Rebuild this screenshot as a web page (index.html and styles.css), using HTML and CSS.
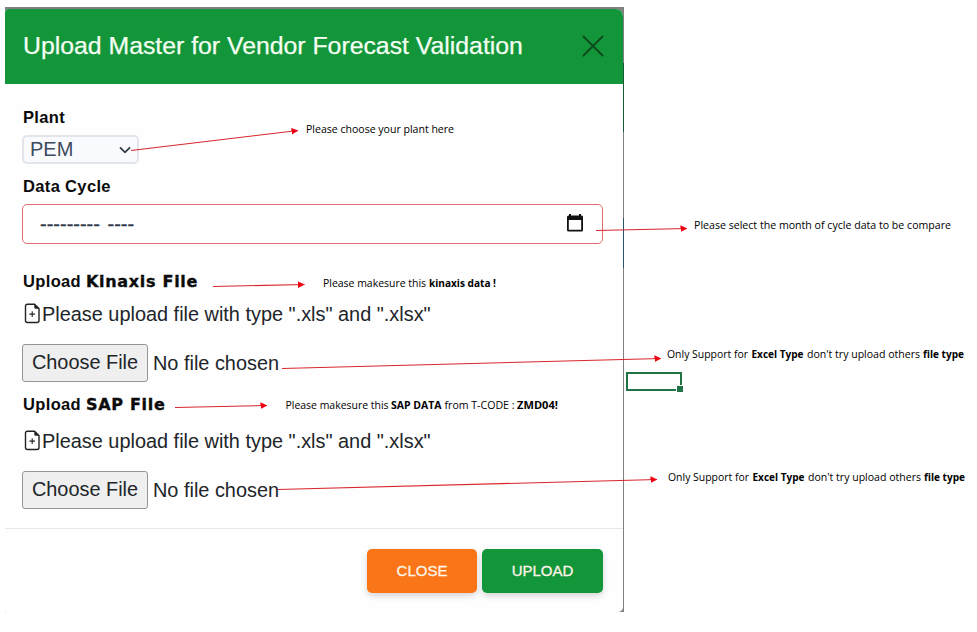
FILE: index.html
```html
<!DOCTYPE html>
<html lang="en">
<head>
<meta charset="utf-8">
<title>Upload Master for Vendor Forecast Validation</title>
<link rel="stylesheet" href="styles.css">
</head>
<body>
<main class="sheet">
  <section class="backdrop">
    <div class="modal">
      <header class="modal-header">
        <h1 class="title">Upload Master for Vendor Forecast Validation</h1>
        <svg class="close-icon" width="22" height="22" viewBox="0 0 22 22"><path d="M1.5 1.5 20.5 20.5M20.5 1.5 1.5 20.5"/></svg>
      </header>
      <div class="modal-body">
        <div class="label">Plant</div>
        <div class="select"><span>PEM</span>
          <svg width="12" height="8" viewBox="0 0 12 8"><path d="M1 1.3 6 6.3 11 1.3"/></svg>
        </div>
        <div class="label label-cycle">Data Cycle</div>
        <div class="month"><span class="month-text">--------- ----</span>
          <svg class="calendar" width="18" height="18" viewBox="0 0 18 18"><path fill-rule="evenodd" d="M3 0h2v1.500h8V0h2v1.500h.5Q17 1.500 17 3v13q0 1.500-1.500 1.500h-13Q1 17.500 1 16V3Q1 1.500 2.500 1.500H3zM2.800 6v9.700h12.400V6z"/></svg>
        </div>
        <div class="label label-kinaxis">Upload <b class="heavy">Kinaxis File</b></div>
        <div class="hint"><svg class="file-icon" width="17" height="21" viewBox="0 0 17 21"><path class="line" d="M10.500 1.200H3.500Q1.500 1.200 1.500 3.200V17.500Q1.500 19.500 3.500 19.500H13Q15 19.500 15 17.500V5.500z"/><path class="plus" d="M8.200 8.300v5.600M5.400 11.100h5.600"/><path d="M10.300 1v3.200q0 1.500 1.500 1.500H15z"/></svg><span>Please upload file with type ".xls" and ".xlsx"</span></div>
        <div class="file"><span class="choose">Choose File</span><span class="status">No file chosen</span></div>
        <div class="label label-sap">Upload <b class="heavy">SAP File</b></div>
        <div class="hint hint-sap"><svg class="file-icon" width="17" height="21" viewBox="0 0 17 21"><path class="line" d="M10.500 1.200H3.500Q1.500 1.200 1.500 3.200V17.500Q1.500 19.500 3.500 19.500H13Q15 19.500 15 17.500V5.500z"/><path class="plus" d="M8.200 8.300v5.600M5.400 11.100h5.600"/><path d="M10.300 1v3.200q0 1.500 1.500 1.500H15z"/></svg><span>Please upload file with type ".xls" and ".xlsx"</span></div>
        <div class="file"><span class="choose">Choose File</span><span class="status">No file chosen</span></div>
      </div>
      <footer class="modal-footer">
        <div class="btn btn-close">CLOSE</div>
        <div class="btn btn-upload">UPLOAD</div>
      </footer>
    </div>
  </section>
  <svg class="notes" width="977" height="632" viewBox="0 0 977 632">
    <defs>
      <marker id="head" markerUnits="userSpaceOnUse" markerWidth="7" markerHeight="7" refX="6.500" refY="3.500" orient="auto"><path class="head" d="M0 .2 6.800 3.500 0 6.800z"/></marker>
    </defs>
    <path class="edge-green" d="M623.5 63V132"/>
    <path class="edge-blue" d="M623.500 218V268"/>
    <g class="arrows">
      <path d="M131 150.500 298 130.500"/>
      <path d="M596 230.500 687 228.500"/>
      <path d="M213 286.500 304.500 284.500"/>
      <path d="M282 368.500 661 358.500"/>
      <path d="M175 407.500 267 405.500"/>
      <path d="M278 489.500 657 479.500"/>
    </g>
    <g class="cell">
      <rect x="627" y="373" width="54" height="17"/>
      <rect class="handle" x="676.500" y="385.500" width="7" height="7"/>
    </g>
    <g class="captions">
      <text x="306" y="133" textLength="148" lengthAdjust="spacingAndGlyphs">Please choose your plant here</text>
      <text x="694" y="229" textLength="257" lengthAdjust="spacingAndGlyphs">Please select the month of cycle data to be compare</text>
      <text x="323" y="287" textLength="103" lengthAdjust="spacingAndGlyphs">Please makesure this</text>
      <text class="bold" x="429" y="287" textLength="67" lengthAdjust="spacingAndGlyphs">kinaxis data !</text>
      <text x="667" y="358" textLength="81" lengthAdjust="spacingAndGlyphs">Only Support for</text>
      <text class="bold" x="751.500" y="358" textLength="52" lengthAdjust="spacingAndGlyphs">Excel Type</text>
      <text x="807" y="358" textLength="113" lengthAdjust="spacingAndGlyphs">don't try upload others</text>
      <text class="bold" x="923" y="358" textLength="41" lengthAdjust="spacingAndGlyphs">file type</text>
      <text x="285.500" y="409" textLength="103" lengthAdjust="spacingAndGlyphs">Please makesure this</text>
      <text class="bold" x="391" y="409" textLength="50.500" lengthAdjust="spacingAndGlyphs">SAP DATA</text>
      <text x="444.500" y="409" textLength="70" lengthAdjust="spacingAndGlyphs">from T-CODE :</text>
      <text class="bold" x="517" y="409" textLength="41" lengthAdjust="spacingAndGlyphs">ZMD04!</text>
      <text x="668" y="481" textLength="81" lengthAdjust="spacingAndGlyphs">Only Support for</text>
      <text class="bold" x="752.500" y="481" textLength="52" lengthAdjust="spacingAndGlyphs">Excel Type</text>
      <text x="808" y="481" textLength="113" lengthAdjust="spacingAndGlyphs">don't try upload others</text>
      <text class="bold" x="924" y="481" textLength="41" lengthAdjust="spacingAndGlyphs">file type</text>
    </g>
  </svg>
</main>
</body>
</html>
```
FILE: styles.css
```css
* { box-sizing: border-box; }
body { margin: 0; background: #fff; font-family: "Liberation Sans", Arial, sans-serif; color: #212529; overflow: hidden; }
.sheet { position: relative; width: 977px; height: 632px; padding: 7px 0 0 5px; }
.backdrop { width: 619px; height: 605px; padding: 2px 1px 0 0; background: #808080; }
.modal { height: 603px; background: #fefefe; border-radius: 4px 7px 5px 1px; overflow: hidden; }
.modal-header { height: 75px; padding: 0 19px 2px 18px; display: flex; align-items: center; justify-content: space-between; background: #139639; }
.title { margin: 0; font-size: 24.8px; font-weight: 400; line-height: 30px; color: #f4fff4; white-space: nowrap; -webkit-text-stroke: .25px #f4fff4; }
.close-icon { fill: none; stroke: #0b4c1e; stroke-width: 2; stroke-linecap: round; }
.modal-body { height: 444px; padding: 22px 20px 0 17px; }
.label { height: 22px; line-height: 22px; padding-left: 1px; font-size: 16.5px; font-weight: 700; letter-spacing: .35px; color: #0b0b0b; white-space: nowrap; }
.heavy { font-family: "DejaVu Sans", sans-serif; font-size: 16px; font-weight: 700; letter-spacing: .7px; -webkit-text-stroke: .35px #0b0b0b; }
.select { width: 117px; height: 29px; margin-top: 7px; padding: 0 6px; border: 2px solid #e2e5ea; border-radius: 5px; background: #f8fafd; display: flex; align-items: center; justify-content: space-between; font-size: 20px; color: #3f4a5c; }
.select svg { fill: none; stroke: #333b45; stroke-width: 1.8; }
.label-cycle { margin-top: 11px; }
.month { height: 40px; margin-top: 7px; padding: 0 18px 0 17px; border: 1px solid #e36a70; border-radius: 5px; background: #fff; display: flex; align-items: center; justify-content: space-between; font-size: 20px; color: #2d3748; }
.month-text { word-spacing: 2px; -webkit-text-stroke: .3px #2d3748; }
.calendar { fill: #111; margin-bottom: 2px; }
.label-kinaxis { margin-top: 26px; }
.hint { height: 32px; margin-top: 6px; display: flex; align-items: center; font-size: 19.9px; white-space: nowrap; padding-left: 2px; gap: 1px; }
.hint-sap { margin-top: 10px; }
.file-icon { fill: #222; margin-bottom: 1px; }
.file-icon .line { fill: none; stroke: #222; stroke-width: 1.4; }
.file-icon .plus { fill: none; stroke: #222; stroke-width: 1.1; }
.file { height: 38px; margin-top: 14px; display: flex; align-items: center; font-size: 19.9px; gap: 5px; white-space: nowrap; }
.choose { width: 126px; height: 38px; line-height: 35px; text-align: center; border: 1px solid #959595; border-radius: 3px; background: #efefef; }
.label-sap { margin-top: 11px; }
.modal-footer { height: 84px; padding: 20px 20px 0 0; border-top: 1px solid #e8e8e8; display: flex; justify-content: flex-end; gap: 5px; }
.btn { height: 44px; line-height: 43px; border-radius: 5px; text-align: center; font-size: 15px; color: #fff4e8; -webkit-text-stroke: .3px #fff4e8; box-shadow: 0 3px 6px rgba(0, 0, 0, .16); }
.btn-close { width: 110px; background: #fa7517; }
.btn-upload { width: 121px; background: #139639; }
.notes { position: absolute; left: 0; top: 0; }
.arrows path { fill: none; stroke: #d8262c; stroke-width: 1.1; marker-end: url(#head); }
.head { fill: #f00010; }
.edge-green { stroke: #185c37; }
.edge-blue { stroke: #2c5268; }
.cell rect { fill: none; stroke: #217346; stroke-width: 2; }
.cell .handle { fill: #217346; stroke: #fff; stroke-width: 1; }
.captions { font-family: "Open Sans", "Noto Sans", sans-serif; font-size: 11px; fill: #000; }
.bold { font-weight: 700; }
```
